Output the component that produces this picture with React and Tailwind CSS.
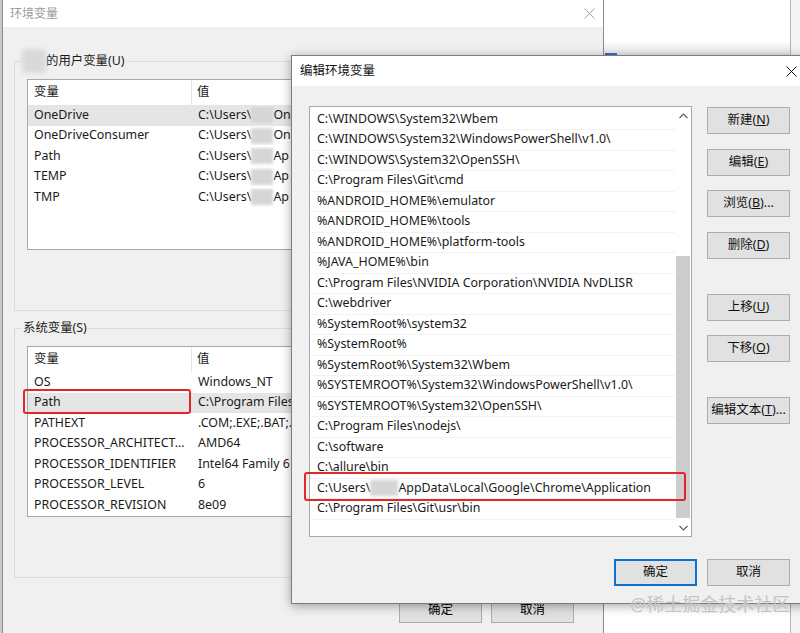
import React from "react";

const FONT = "font-['Noto_Sans','Noto_Sans_CJK_SC',sans-serif]";

function Blur({ wide }) {
  return (
    <span
      className={
        wide
          ? "inline-block align-middle shrink-0 w-[28px] h-[16px] bg-[#d6d6d6] blur-[1.5px]"
          : "inline-block align-middle shrink-0 w-[22px] h-[16px] bg-[#d6d6d6] blur-[1.5px]"
      }
    />
  );
}

function CloseX({ light }) {
  return (
    <svg width="11" height="11" viewBox="0 0 11 11" className="shrink-0">
      <path
        d="M0.5 0.5 L10.5 10.5 M10.5 0.5 L0.5 10.5"
        stroke={light ? "#a0a0a0" : "#111"}
        strokeWidth="1"
        fill="none"
      />
    </svg>
  );
}

function WinButton({ children, focused }) {
  return (
    <div
      className={
        (focused
          ? "border-2 border-[#0a72d1] "
          : "border border-[#adadad] ") +
        "w-[83px] h-[27px] bg-[#e1e1e1] flex items-center justify-center text-[12.5px] text-[#111] shrink-0"
      }
    >
      {children}
    </div>
  );
}

function ListView({ rows, selected }) {
  return (
    <div className="w-[551px] h-[171px] bg-white border border-[#a8a8a8] flex flex-col text-[12.4px] text-[#1a1a1a]">
      <div className="flex h-[25px] shrink-0">
        <div className="w-[164px] pl-[6px] border-r border-[#e5e5e5] flex items-center">
          变量
        </div>
        <div className="pl-[5px] flex items-center">值</div>
      </div>
      {rows.map((r, i) => (
        <div
          key={i}
          className={
            (i === selected ? "bg-[#e5e5e5] " : "") +
            "flex h-[20.5px] items-center shrink-0 whitespace-nowrap"
          }
        >
          <div className="w-[165px] pl-[6px] overflow-hidden">{r[0]}</div>
          <div className="pl-[5px] w-[104px] overflow-hidden flex items-center">{r[1]}</div>
        </div>
      ))}
    </div>
  );
}

const userRows = [
  ["OneDrive", <>C:\Users\<Blur />On</>],
  ["OneDriveConsumer", <>C:\Users\<Blur />On</>],
  ["Path", <>C:\Users\<Blur />Ap</>],
  ["TEMP", <>C:\Users\<Blur />Ap</>],
  ["TMP", <>C:\Users\<Blur />Ap</>],
];

const sysRows = [
  ["OS", "Windows_NT"],
  ["Path", "C:\\Program Files"],
  ["PATHEXT", ".COM;.EXE;.BAT;."],
  ["PROCESSOR_ARCHITECT...", "AMD64"],
  ["PROCESSOR_IDENTIFIER", "Intel64 Family 6"],
  ["PROCESSOR_LEVEL", "6"],
  ["PROCESSOR_REVISION", "8e09"],
];

const paths = [
  "C:\\WINDOWS\\System32\\Wbem",
  "C:\\WINDOWS\\System32\\WindowsPowerShell\\v1.0\\",
  "C:\\WINDOWS\\System32\\OpenSSH\\",
  "C:\\Program Files\\Git\\cmd",
  "%ANDROID_HOME%\\emulator",
  "%ANDROID_HOME%\\tools",
  "%ANDROID_HOME%\\platform-tools",
  "%JAVA_HOME%\\bin",
  "C:\\Program Files\\NVIDIA Corporation\\NVIDIA NvDLISR",
  "C:\\webdriver",
  "%SystemRoot%\\system32",
  "%SystemRoot%",
  "%SystemRoot%\\System32\\Wbem",
  "%SYSTEMROOT%\\System32\\WindowsPowerShell\\v1.0\\",
  "%SYSTEMROOT%\\System32\\OpenSSH\\",
  "C:\\Program Files\\nodejs\\",
  "C:\\software",
  "C:\\allure\\bin",
  "CHROME",
  "C:\\Program Files\\Git\\usr\\bin",
];

export default function App() {
  return (
    <div className={FONT + " relative w-[800px] h-[633px] overflow-hidden bg-[#f4f4f4]"}>
      {/* left edge of another window */}
      <div className="absolute left-0 top-0 w-[2px] h-[633px] bg-[#c9c9c9]" />

      {/* window behind, to the right */}
      <div className="absolute left-[603px] top-0 w-[188px] h-[633px] bg-white border-r border-[#b5b5b5] flex flex-col">
        <div className="h-[43px]" />
        <div className="h-[12px] bg-gradient-to-b from-[#fafafa] to-[#e6e6e6]" />
        <div className="ml-[2px] -mt-[2px] w-[12px] h-[3px] bg-[#3c6fc4]" />
      </div>

      {/* main window: 环境变量 */}
      <div className="absolute left-[2px] top-0 w-[602px] h-[633px] bg-[#f0f0f0] border-l border-r border-[#8c8c8c] flex flex-col">
        <div className="h-[27px] bg-white flex items-center justify-between pl-[7px] pr-[8px] text-[12px] text-[#9a9a9a] shrink-0">
          <span>环境变量</span>
          <CloseX light />
        </div>

        <div className="relative ml-[11px] mt-[34px] w-[577px] h-[250px] border border-[#dcdcdc] pl-[12px] pt-[17px]">
          <div className="absolute left-[7px] -top-[13px] flex items-center bg-[#f0f0f0] pr-[2px] text-[12.4px] text-[#1a1a1a]">
            <span className="inline-block w-[24px] h-[24px] bg-[#d9d9d9] blur-[2px] rounded-sm" />
            <span>的用户变量(U)</span>
          </div>
          <ListView rows={userRows} selected={0} />
        </div>

        <div className="relative ml-[11px] mt-[17px] w-[577px] h-[250px] border border-[#dcdcdc] pl-[12px] pt-[17px]">
          <div className="absolute left-[7px] -top-[10px] bg-[#f0f0f0] px-[1px] text-[12.4px] leading-[18px] text-[#1a1a1a]">
            系统变量(S)
          </div>
          <ListView rows={sysRows} selected={1} />
        </div>

        <div className="mt-[20px] flex justify-end gap-[9px] pr-[29px]">
          <div className="w-[83px] h-[25px] bg-[#e1e1e1] border border-[#adadad] flex items-center justify-center text-[12.5px]">确定</div>
          <div className="w-[83px] h-[25px] bg-[#e1e1e1] border border-[#adadad] flex items-center justify-center text-[12.5px]">取消</div>
        </div>
      </div>

      {/* red box on Path in system list */}
      <div className="absolute left-[23px] top-[389px] w-[168px] h-[25px] border-2 border-[#e3262a] rounded-[3px]" />

      {/* dialog: 编辑环境变量 */}
      <div className="absolute left-[291px] top-[55px] w-[520px] h-[549px] bg-[#f0f0f0] border border-[#7c7c7c] shadow-[0_2px_10px_rgba(0,0,0,0.35)] flex flex-col">
        <div className="h-[30px] bg-white flex items-center justify-between pl-[8px] shrink-0 text-[12.5px] text-[#111]">
          <span>编辑环境变量</span>
          <div className="w-[28px] mr-[13px] flex justify-end">
            <CloseX />
          </div>
        </div>

        <div className="pl-[17px] pt-[20px] flex flex-col">
          <div className="flex">
            <div className="relative">
              <div className="w-[383px] h-[431px] bg-white border border-[#a8a8a8] flex">
                <div className="flex-1 pt-[2.5px] flex flex-col text-[12.4px] text-[#1a1a1a]">
                  {paths.map((p, i) => (
                    <div
                      key={i}
                      className="h-[20.5px] pl-[7px] flex items-center border-b border-[#f3f3f3] whitespace-nowrap shrink-0"
                    >
                      {p === "CHROME" ? (
                        <>C:\Users\<Blur wide />AppData\Local\Google\Chrome\Application</>
                      ) : (
                        p
                      )}
                    </div>
                  ))}
                </div>
                <div className="w-[16px] flex flex-col bg-white">
                  <div className="h-[17px] flex items-center justify-center">
                    <svg width="9" height="6" viewBox="0 0 9 6">
                      <path d="M0.5 5 L4.5 1 L8.5 5" stroke="#606060" strokeWidth="1.2" fill="none" />
                    </svg>
                  </div>
                  <div className="flex-1 pt-[132px]">
                    <div className="mx-[1px] h-[262px] bg-[#cdcdcd]" />
                  </div>
                  <div className="h-[17px] flex items-center justify-center">
                    <svg width="9" height="6" viewBox="0 0 9 6">
                      <path d="M0.5 1 L4.5 5 L8.5 1" stroke="#606060" strokeWidth="1.2" fill="none" />
                    </svg>
                  </div>
                </div>
              </div>
              {/* red highlight box */}
              <div className="absolute -left-[5px] top-[366px] w-[382px] h-[29px] border-2 border-[#e3262a] rounded-[3px]" />
            </div>

            <div className="ml-[15px] mt-[1px] flex flex-col">
              <WinButton>新建(<u>N</u>)</WinButton>
              <div className="mt-[15px]"><WinButton>编辑(<u>E</u>)</WinButton></div>
              <div className="mt-[14px]"><WinButton>浏览(<u>B</u>)...</WinButton></div>
              <div className="mt-[15px]"><WinButton>删除(<u>D</u>)</WinButton></div>
              <div className="mt-[35px]"><WinButton>上移(<u>U</u>)</WinButton></div>
              <div className="mt-[14px]"><WinButton>下移(<u>O</u>)</WinButton></div>
              <div className="mt-[35px]"><WinButton>编辑文本(<u>T</u>)...</WinButton></div>
            </div>
          </div>

          <div className="w-[481px] mt-[22px] flex justify-end gap-[10px]">
            <WinButton focused>确定</WinButton>
            <WinButton>取消</WinButton>
          </div>
        </div>
      </div>

      {/* watermark */}
      <div className="absolute left-[630px] top-[593px] text-[18px] leading-[22px] text-[#c4c4c4] whitespace-nowrap">
        @稀土掘金技术社区
      </div>
    </div>
  );
}
